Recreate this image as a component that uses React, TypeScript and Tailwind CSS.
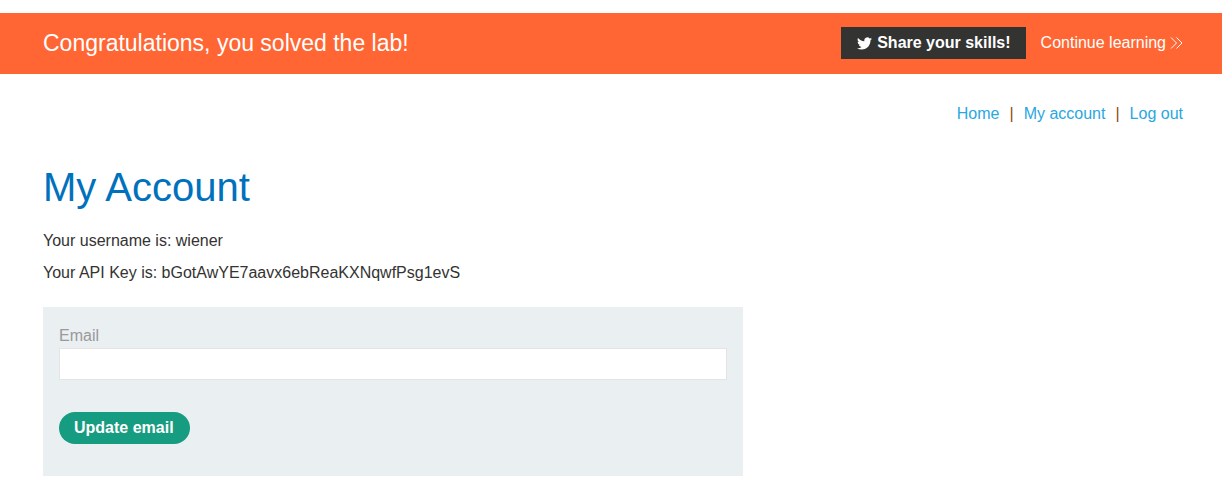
import React from "react";

function TwitterIcon() {
  return (
    <svg width="15" height="13" viewBox="0 0 24 20" fill="#fff" aria-hidden="true">
      <path d="M23.95 2.57a10 10 0 0 1-2.82.77 4.96 4.96 0 0 0 2.16-2.72c-.95.55-2 .95-3.13 1.18a4.92 4.92 0 0 0-8.38 4.48C7.69 6.1 4.07 4.13 1.64 1.16a4.82 4.82 0 0 0-.67 2.48c0 1.71.87 3.21 2.19 4.1a4.9 4.9 0 0 1-2.23-.62v.06a4.92 4.92 0 0 0 3.95 4.83 5 5 0 0 1-2.21.08 4.94 4.94 0 0 0 4.6 3.42A9.87 9.87 0 0 1 0 17.54a14 14 0 0 0 7.55 2.21c9.05 0 14-7.5 14-13.98 0-.21 0-.42-.02-.63a9.94 9.94 0 0 0 2.46-2.55z" />
    </svg>
  );
}

function DoubleChevron() {
  return (
    <svg width="13" height="12" viewBox="0 0 13 12" fill="none" aria-hidden="true">
      <path d="M1 0.5L6.5 6L1 11.5" stroke="#fff" strokeWidth="1" />
      <path d="M6.5 0.5L12 6L6.5 11.5" stroke="#fff" strokeWidth="1" />
    </svg>
  );
}

function Banner() {
  return (
    <header className="flex flex-wrap items-center justify-between bg-[#ff6633] pt-[14px] pr-[39px] pb-[15px] pl-[43px] text-white">
      <h4 className="text-[23px] leading-8">Congratulations, you solved the lab!</h4>
      <div className="flex items-center gap-[15px]">
        <button type="button" className="flex h-8 items-center gap-[5px] bg-[#333332] pr-[15px] pl-4 font-bold">
          <TwitterIcon />
          Share your skills!
        </button>
        <a href="#learn" className="flex items-center gap-1">
          Continue learning
          <DoubleChevron />
        </a>
      </div>
    </header>
  );
}

function TopLinks() {
  return (
    <nav className="flex justify-end gap-[10px] text-[#29a7df]">
      <a href="#home">Home</a>
      <span className="text-[#8a4a10]">|</span>
      <a href="#account">My account</a>
      <span className="text-[#8a4a10]">|</span>
      <a href="#logout">Log out</a>
    </nav>
  );
}

export default function App() {
  return (
    <div className="bg-white pt-[13px] font-['Liberation_Sans',Arial,sans-serif] text-base text-[#333332]">
      <Banner />
      <main className="pt-7 pr-[39px] pb-[14px] pl-[43px]">
        <TopLinks />
        <h1 className="mt-9 text-[40px] leading-[50px] text-[#0071bc]">My Account</h1>
        <p className="mt-[17px]">Your username is: wiener</p>
        <p className="mt-2">Your API Key is: bGotAwYE7aavx6ebReaKXNqwfPsg1evS</p>
        <form className="mt-[22px] max-w-[700px] bg-[#eaeff2] px-4 pt-[17px] pb-8" onSubmit={(e) => e.preventDefault()}>
          <label htmlFor="email" className="block text-[#999999]">
            Email
          </label>
          <input id="email" type="email" className="block h-8 w-full border border-[#e4e4e4] bg-white px-2 outline-none" />
          <button type="submit" className="mt-8 block h-8 rounded-full bg-[#169c80] pr-4 pl-[15px] font-bold text-white">
            Update email
          </button>
        </form>
      </main>
    </div>
  );
}
